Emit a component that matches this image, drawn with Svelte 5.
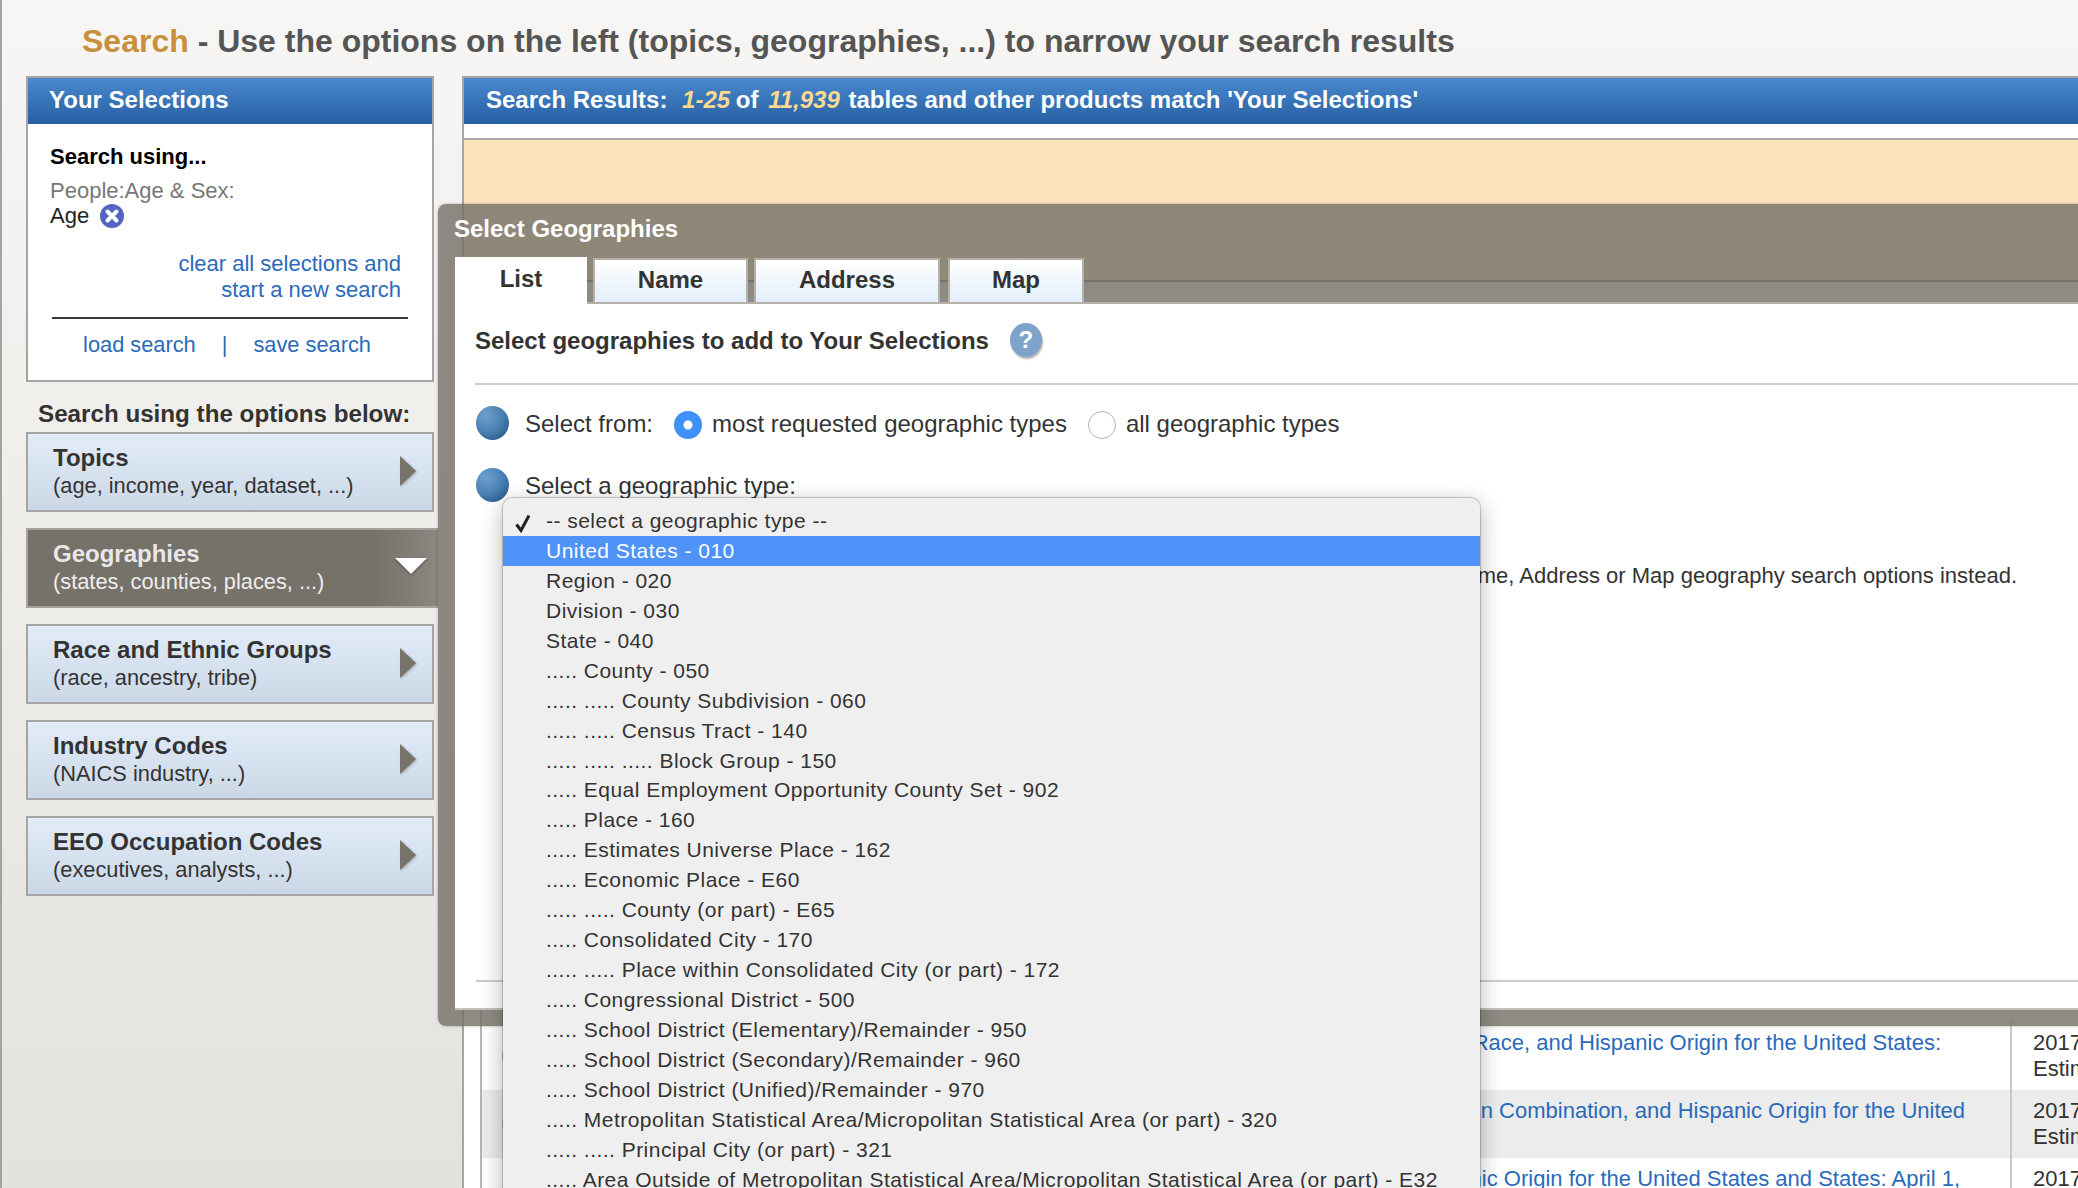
<script>
	const groups = [
		{ title: "Topics", sub: "(age, income, year, dataset, ...)" },
		{ title: "Geographies", sub: "(states, counties, places, ...)", active: true },
		{ title: "Race and Ethnic Groups", sub: "(race, ancestry, tribe)" },
		{ title: "Industry Codes", sub: "(NAICS industry, ...)" },
		{ title: "EEO Occupation Codes", sub: "(executives, analysts, ...)" },
	];

	const tabs = ["List", "Name", "Address", "Map"];

	const types = [
		"-- select a geographic type --",
		"United States - 010",
		"Region - 020",
		"Division - 030",
		"State - 040",
		"..... County - 050",
		"..... ..... County Subdivision - 060",
		"..... ..... Census Tract - 140",
		"..... ..... ..... Block Group - 150",
		"..... Equal Employment Opportunity County Set - 902",
		"..... Place - 160",
		"..... Estimates Universe Place - 162",
		"..... Economic Place - E60",
		"..... ..... County (or part) - E65",
		"..... Consolidated City - 170",
		"..... ..... Place within Consolidated City (or part) - 172",
		"..... Congressional District - 500",
		"..... School District (Elementary)/Remainder - 950",
		"..... School District (Secondary)/Remainder - 960",
		"..... School District (Unified)/Remainder - 970",
		"..... Metropolitan Statistical Area/Micropolitan Statistical Area (or part) - 320",
		"..... ..... Principal City (or part) - 321",
		"..... Area Outside of Metropolitan Statistical Area/Micropolitan Statistical Area (or part) - E32",
	];

	const results = [
		{ text: "Annual Estimates of the Resident Population by Sex, Age, Race, and Hispanic Origin for the United States:", gap: 69 },
		{ text: "Annual Estimates of the Resident Population by Sex, Age, Race Alone or in Combination, and Hispanic Origin for the United", gap: 45, alt: true },
		{ text: "Annual Estimates of the Resident Population by Sex, Race, and Hispanic Origin for the United States and States: April 1,", gap: 50 },
	];
</script>

<div class="page">
	<h1><span class="accent">Search</span> - Use the options on the left (topics, geographies, ...) to narrow your search results</h1>

	<div class="columns">
		<aside>
			<section class="selections">
				<div class="bar">Your Selections</div>
				<div class="sel-body">
					<b class="using">Search using...</b>
					<div class="crumb">People:Age &amp; Sex:</div>
					<div class="age">
						Age
						<svg width="26" height="26" viewBox="0 0 26 26">
							<circle cx="13" cy="13" r="12" fill="#5563c4" />
							<path d="M8.5 8.5l9 9M17.5 8.5l-9 9" stroke="#fff" stroke-width="4" stroke-linecap="round" />
						</svg>
					</div>
					<div class="clear"><a href="#top">clear all selections and<br />start a new search</a></div>
					<div class="load">
						<a href="#top">load search</a>
						<span>|</span>
						<a href="#top">save search</a>
					</div>
				</div>
			</section>

			<h2>Search using the options below:</h2>

			<div class="groups">
				{#each groups as g}
					<div class="group" class:active={g.active}>
						<div>
							<b>{g.title}</b>
							<div class="sub">{g.sub}</div>
						</div>
						{#if g.active}
							<svg class="arrow-down" width="34" height="22" viewBox="0 0 34 22">
								<polygon points="1,2 33,2 17,18" fill="#fff" />
							</svg>
						{:else}
							<svg class="arrow" width="20" height="34" viewBox="0 0 20 34">
								<polygon points="2,2 18,17 2,32" fill="#77736a" />
							</svg>
						{/if}
					</div>
				{/each}
			</div>
		</aside>

		<main>
			<div class="bar results-bar">
				Search Results: <i>1-25</i> of <i>11,939</i> tables and other products match 'Your Selections'
			</div>
			<div class="notice"></div>
			<div class="table">
				<div class="under"></div>
				{#each results as r}
					<div class="row" class:alt={r.alt}>
						<span class="ring"></span>
						<div class="title" style="padding-right: {r.gap}px"><a href="#top">{r.text}</a></div>
						<div class="year">2017<br />Estimates</div>
					</div>
				{/each}
			</div>
		</main>
	</div>

	<div class="modal">
		<div class="modal-title">Select Geographies</div>
		<div class="tabs">
			{#each tabs as t, i}
				<div class="tab" class:current={i === 0}>{t}</div>
			{/each}
		</div>
		<div class="modal-body">
			<div class="heading">
				Select geographies to add to Your Selections
				<span class="help">?</span>
			</div>
			<div class="step">
				<span class="ball"></span>
				<span class="label">Select from:</span>
				<span class="radio on"></span>
				<span class="opt">most requested geographic types</span>
				<span class="radio"></span>
				<span class="opt">all geographic types</span>
			</div>
			<div class="step second">
				<span class="ball"></span>
				<span class="label">Select a geographic type:</span>
			</div>
			<p class="hint">If you cannot find the geography you are looking for, try the Name, Address or Map geography search options instead.</p>

			<div class="menu">
				{#each types as t, i}
					<div class="item" class:hl={i === 1}>
						{#if i === 0}
							<svg class="check" width="18" height="20" viewBox="0 0 18 20">
								<path d="M2.5 11.5l4.5 6L15 2.5" fill="none" stroke="#222" stroke-width="3" />
							</svg>
						{/if}
						{t}
					</div>
				{/each}
			</div>
		</div>
	</div>
</div>

<style>
	:global(body) {
		margin: 0;
		overflow: hidden;
	}

	.page {
		position: relative;
		width: 2078px;
		height: 1188px;
		overflow: hidden;
		box-sizing: border-box;
		border-left: 2px solid #a3a3a3;
		background: linear-gradient(#f7f6f4, #e4e2de);
		font-family: "Liberation Sans", Arial, sans-serif;
		color: #333;
	}

	a {
		color: #2a6abb;
		text-decoration: none;
	}

	h1 {
		margin: 0;
		padding: 23px 0 0 80px;
		height: 53px;
		box-sizing: border-box;
		font-size: 32px;
		line-height: 36px;
		color: #555;
		white-space: nowrap;
	}

	.accent {
		color: #c8903c;
	}

	.columns {
		display: flex;
		align-items: flex-start;
		padding: 23px 0 0 24px;
		gap: 28px;
	}

	aside {
		width: 408px;
		flex: none;
	}

	.bar {
		height: 46px;
		box-sizing: border-box;
		background: linear-gradient(#4a87cd, #2660a3);
		color: #fff;
		font-weight: bold;
		font-size: 24px;
		line-height: 44px;
		padding-left: 21px;
	}

	.selections {
		border: 2px solid #a5a5a5;
		background: #fff;
		height: 306px;
		box-sizing: border-box;
	}

	.sel-body {
		padding: 20px 22px 0;
		font-size: 22px;
		line-height: 26px;
	}

	.using {
		display: block;
		color: #000;
		margin-bottom: 8px;
	}

	.crumb {
		color: #777;
	}

	.age {
		display: flex;
		align-items: center;
		gap: 10px;
		color: #222;
		height: 27px;
		margin-top: -2px;
	}

	.clear {
		text-align: right;
		margin: 22px 0 0;
		padding-right: 9px;
		height: 66px;
	}

	.load {
		margin: 0 0 0 2px;
		width: 356px;
		box-sizing: border-box;
		border-top: 2px solid #3a3a3a;
		padding: 13px 6px 0 0;
		display: flex;
		justify-content: center;
		gap: 26px;
		font-size: 21.8px;
	}

	.load span {
		color: #2a6abb;
	}

	h2 {
		margin: 0;
		padding: 19px 0 0 12px;
		height: 50px;
		box-sizing: border-box;
		font-size: 24.2px;
		line-height: 26px;
		white-space: nowrap;
	}

	.groups {
		display: flex;
		flex-direction: column;
		gap: 16px;
	}

	.group {
		height: 80px;
		box-sizing: border-box;
		border: 2px solid #a5a5a5;
		background: linear-gradient(#e2ecf9, #ccd8e6);
		display: flex;
		justify-content: space-between;
		align-items: center;
		padding: 0 12px 2px 25px;
		font-size: 21.8px;
		line-height: 27px;
	}

	.group b {
		font-size: 24px;
	}

	.sub {
		white-space: nowrap;
	}

	.arrow {
		filter: drop-shadow(1px 1px 1px rgba(0, 0, 0, 0.25));
		margin-right: 2px;
	}

	.group.active {
		width: 412px;
		border-color: #a5a39e;
		border-right: 0;
		background: linear-gradient(90deg, #767169 85%, #8b8881);
		color: #eee;
		padding-right: 10px;
	}

	.group.active b {
		color: #e8e8e8;
	}

	.arrow-down {
		filter: drop-shadow(0 1px 1px rgba(0, 0, 0, 0.4));
	}

	main {
		flex: 1;
		height: 1200px;
		border-top: 2px solid #a5a5a5;
		border-left: 2px solid #a5a5a5;
		background: #fff;
	}

	.results-bar {
		padding-left: 22px;
		white-space: nowrap;
	}

	.results-bar i {
		color: #fbd98e;
		margin: 0 2px 0 3px;
	}

	.results-bar i:first-of-type {
		margin: 0 -1px 0 8px;
	}

	.notice {
		margin-top: 14px;
		height: 140px;
		border-top: 2px solid #a8a8a4;
		border-bottom: 2px solid #7d7d7d;
		background: #fce5bc;
	}

	.table {
		margin-left: 16px;
		border-left: 2px solid #b5b5b5;
	}

	.under {
		height: 740px;
	}

	.row {
		height: 68px;
		display: flex;
		font-size: 22px;
		line-height: 26px;
	}

	.row.alt {
		background: #ececec;
	}

	.ring {
		flex: none;
		align-self: center;
		width: 26px;
		height: 26px;
		box-sizing: border-box;
		margin-left: 20px;
		border: 2px solid #b5b5b5;
		border-radius: 50%;
	}

	.title {
		flex: 1;
		min-width: 0;
		display: flex;
		justify-content: flex-end;
		white-space: nowrap;
		overflow: hidden;
		padding-top: 8px;
	}

	.year {
		width: 68px;
		flex: none;
		box-sizing: border-box;
		border-left: 2px solid #c8c8c8;
		padding: 8px 0 0 21px;
		white-space: nowrap;
	}

	.modal {
		position: absolute;
		left: 436px;
		top: 204px;
		width: 1700px;
		height: 822px;
		box-sizing: border-box;
		padding-left: 17px;
		border-radius: 8px;
		background: rgba(118, 113, 105, 0.82);
		box-shadow: 0 0 3px rgba(0, 0, 0, 0.3);
	}

	.modal-title {
		height: 53px;
		padding-top: 12px;
		box-sizing: border-box;
		color: #fff;
		font-weight: bold;
		font-size: 24px;
		line-height: 26px;
		margin-left: -1px;
	}

	.tabs {
		display: flex;
		height: 47px;
		gap: 6px;
		align-items: flex-end;
		border-bottom: 2px solid #b5b0a8;
		box-sizing: border-box;
	}

	.tab {
		box-sizing: border-box;
		width: 155px;
		height: 44px;
		border: 2px solid #b5b0a8;
		border-bottom: 0;
		background: linear-gradient(#fff, #e2eefa);
		color: #333;
		font-weight: bold;
		font-size: 24px;
		line-height: 40px;
		text-align: center;
	}

	.tab:nth-child(3) {
		width: 186px;
	}

	.tab:nth-child(4) {
		width: 136px;
		margin-left: 2px;
	}

	.tab.current {
		width: 132px;
		border: 0;
		background: #fff;
		margin-bottom: -2px;
		height: 47px;
		line-height: 44px;
	}

	.modal-body {
		position: relative;
		height: 704px;
		background: #fff;
		border-bottom: 2px solid #c4c2bd;
		padding: 0 0 0 21px;
		font-size: 24px;
	}

	.modal-body::after {
		content: "";
		position: absolute;
		left: 21px;
		right: 0;
		bottom: 26px;
		border-bottom: 2px solid #ccc;
	}

	.heading {
		height: 81px;
		box-sizing: border-box;
		border-bottom: 2px solid #ccc;
		padding-top: 19px;
		font-weight: bold;
		font-size: 24px;
		line-height: 36px;
		display: flex;
		gap: 20px;
		margin-left: -1px;
	}

	.help {
		width: 32px;
		height: 34px;
		border-radius: 50%;
		background: #7ea3cb;
		color: #fff;
		text-align: center;
		font-size: 24px;
		line-height: 34px;
		margin-left: 1px;
		box-shadow: 1px 2px 2px rgba(0, 0, 0, 0.3);
	}

	.step {
		display: flex;
		align-items: center;
		height: 34px;
		margin-top: 21px;
	}

	.step.second {
		margin-top: 28px;
	}

	.ball {
		width: 33px;
		height: 34px;
		flex: none;
		border-radius: 50%;
		background: radial-gradient(circle at 30% 28%, #6e9fce, #4a7fb2 50%, #1b4c80);
		margin-right: 16px;
	}

	.label {
		margin-right: 21px;
		padding-top: 2px;
	}

	.radio {
		width: 28px;
		height: 28px;
		box-sizing: border-box;
		border-radius: 50%;
		border: 1px solid #b5b5b5;
		background: #fff;
		margin-right: 10px;
		margin-top: 4px;
	}

	.radio.on {
		border: 0;
		background: radial-gradient(circle, #fff 0 4px, #3f90f8 5px);
	}

	.opt {
		margin-right: 21px;
		padding-top: 2px;
	}

	.hint {
		margin: 61px 0 0;
		text-align: right;
		white-space: nowrap;
		line-height: 26px;
		width: 1541px;
		box-sizing: border-box;
		font-size: 22px;
	}

	.menu {
		position: absolute;
		z-index: 2;
		left: 48px;
		top: 194px;
		width: 977px;
		height: 760px;
		box-sizing: border-box;
		padding-top: 8px;
		border-radius: 9px 9px 0 0;
		background: #efefef;
		box-shadow: 0 0 1px 1px rgba(0, 0, 0, 0.2), 0 6px 22px rgba(0, 0, 0, 0.3);
		font-size: 21px;
		letter-spacing: 0.47px;
		color: #333;
	}

	.item {
		position: relative;
		height: 29.95px;
		line-height: 30px;
		padding-left: 43px;
		white-space: nowrap;
	}

	.item.hl {
		background: #4f92f8;
		color: #fff;
	}

	.check {
		position: absolute;
		left: 11px;
		top: 7px;
	}
</style>
